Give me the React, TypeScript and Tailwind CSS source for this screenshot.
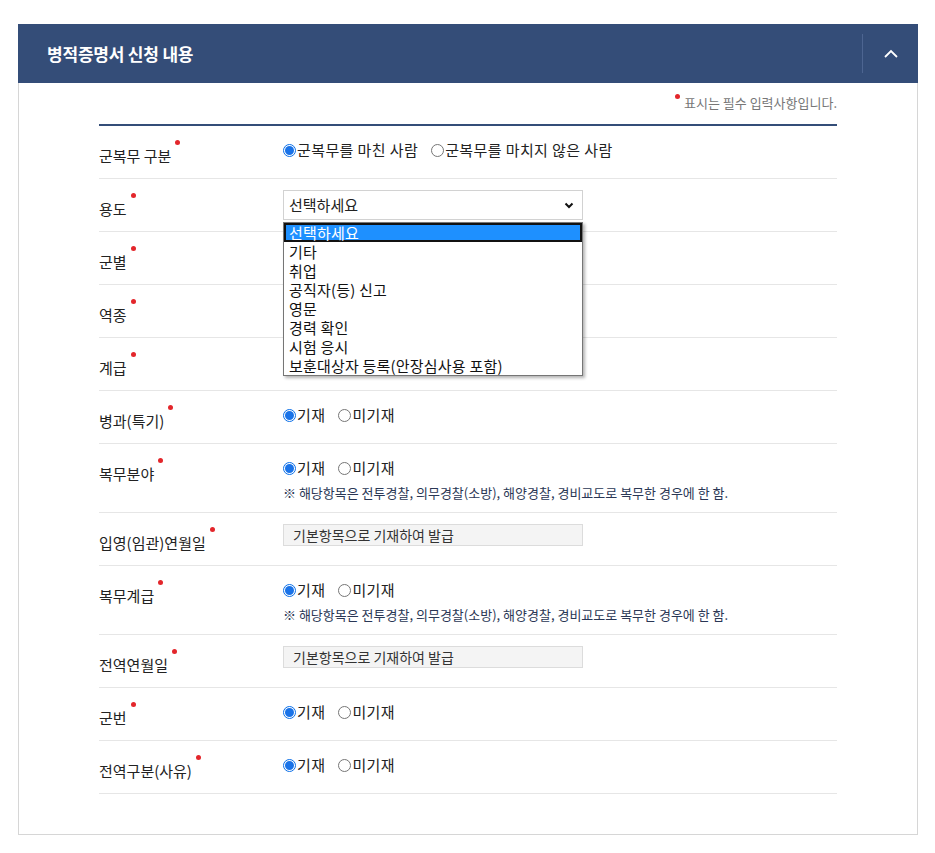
import type { ReactNode } from 'react'

const FONT = { fontFamily: '"Noto Sans CJK KR", "Noto Sans", sans-serif' }

const NOTE = '※ 해당항목은 전투경찰, 의무경찰(소방), 해양경찰, 경비교도로 복무한 경우에 한 함.'

const OPTIONS = [
  '선택하세요',
  '기타',
  '취업',
  '공직자(등) 신고',
  '영문',
  '경력 확인',
  '시험 응시',
  '보훈대상자 등록(안장심사용 포함)',
]

function Label({ children }: { children: ReactNode }) {
  return (
    <div className="pt-[17px]">
      <span className="relative inline-block text-[15px] leading-5 text-[#222]">
        {children}
        <span className="absolute right-[-9px] top-[-6px] h-[5px] w-[5px] rounded-full bg-[#e3262b]" />
      </span>
    </div>
  )
}

function Radio({ checked, label }: { checked?: boolean; label: string }) {
  return (
    <label className="flex items-center">
      <span
        className={
          checked
            ? 'flex h-[13px] w-[13px] items-center justify-center rounded-full border border-[#0b6fe8] bg-white'
            : 'h-[13px] w-[13px] rounded-full border border-[#767676] bg-white'
        }
      >
        {checked ? <span className="h-[9px] w-[9px] rounded-full bg-[#1a73e8]" /> : null}
      </span>
      <span className="ml-[1px] text-[15px] leading-5 tracking-[0.4px] text-[#222]">{label}</span>
    </label>
  )
}

function YesNo() {
  return (
    <div className="flex h-5 items-center gap-[13px]">
      <Radio checked label="기재" />
      <Radio label="미기재" />
    </div>
  )
}

function Row({ label, children, tall }: { label: string; children: ReactNode; tall?: boolean }) {
  return (
    <div
      className={
        'grid grid-cols-[184px_1fr] border-b border-[#e6e6e6] ' + (tall ? 'h-[69px]' : 'h-[53px]')
      }
    >
      <Label>{label}</Label>
      <div>{children}</div>
    </div>
  )
}

function RadioValue({ note }: { note?: boolean }) {
  return (
    <div className="pt-[14px]">
      <YesNo />
      {note ? (
        <p className="mt-[6px] text-[13px] leading-[18px] text-[#2a3755]">{NOTE}</p>
      ) : null}
    </div>
  )
}

function ReadOnly() {
  return (
    <div className="pt-[11px]">
      <div className="flex h-[22px] w-[300px] items-center border border-[#dcdcdc] bg-[#f4f4f4] pl-[9px] text-[14px] text-[#333]">
        기본항목으로 기재하여 발급
      </div>
    </div>
  )
}

export default function App() {
  return (
    <div className="min-h-[853px] bg-white pl-[18px] pt-[24px]" style={FONT}>
      <section className="w-[900px]">
        <header className="flex h-[59px] items-center justify-between bg-[#344d78]">
          <h2 className="pl-[29px] text-[17px] font-bold tracking-[-0.2px] text-white">병적증명서 신청 내용</h2>
          <div className="flex h-[39px] w-[56px] items-center justify-center border-l border-[#4d6591]">
            <svg width="16" height="10" viewBox="0 0 16 10" fill="none">
              <path d="M2 8 L8 2 L14 8" stroke="white" strokeWidth="1.8" />
            </svg>
          </div>
        </header>

        <div className="border border-t-0 border-[#d6d6d6] px-[80px] pb-[40px]">
          <p className="flex items-center justify-end pt-[11px] text-[13px] leading-[18px] text-[#777]">
            <span className="relative -top-[7px] mr-[4px] h-[5px] w-[5px] rounded-full bg-[#e3262b]" />
            표시는 필수 입력사항입니다.
          </p>

          <div className="mt-[12px] border-t-2 border-[#344d78]">
            <div className="grid h-[53px] grid-cols-[184px_1fr] border-b border-[#e6e6e6]">
              <Label>군복무 구분</Label>
              <div className="mt-[14px] flex h-5 items-center gap-[13px] self-start">
                <Radio checked label="군복무를 마친 사람" />
                <Radio label="군복무를 마치지 않은 사람" />
              </div>
            </div>

            <div className="relative z-10 grid h-[53px] grid-cols-[184px_1fr] border-b border-[#e6e6e6]">
              <Label>용도</Label>
              <div className="pt-[11px]">
                <div className="relative w-[300px]">
                  <div className="flex h-[30px] items-center justify-between border border-[#d2d2d2] bg-white pl-[5px] pr-[8px] text-[15px] text-[#222]">
                    선택하세요
                    <svg width="10" height="7" viewBox="0 0 10 7" fill="none">
                      <path d="M1.5 1.5 L5 5 L8.5 1.5" stroke="#111" strokeWidth="2" />
                    </svg>
                  </div>
                  <ul className="absolute left-0 top-[32px] w-[300px] border border-[#767676] bg-white shadow-[2px_2px_3px_rgba(0,0,0,0.3)]">
                    {OPTIONS.map((o, i) => (
                      <li
                        key={o}
                        className={
                          i === 0
                            ? 'h-[19px] border-2 border-[#111] bg-[#1e90ff] pl-[3px] text-[15px] leading-[15px] tracking-[0.2px] text-white'
                            : 'h-[19px] pl-[5px] text-[15px] leading-[19px] tracking-[0.2px] text-[#111]'
                        }
                      >
                        {o}
                      </li>
                    ))}
                  </ul>
                </div>
              </div>
            </div>

            <Row label="군별">
              <div />
            </Row>
            <Row label="역종">
              <div />
            </Row>
            <Row label="계급">
              <div />
            </Row>
            <Row label="병과(특기)">
              <RadioValue />
            </Row>
            <Row label="복무분야" tall>
              <RadioValue note />
            </Row>
            <Row label="입영(임관)연월일">
              <ReadOnly />
            </Row>
            <Row label="복무계급" tall>
              <RadioValue note />
            </Row>
            <Row label="전역연월일">
              <ReadOnly />
            </Row>
            <Row label="군번">
              <RadioValue />
            </Row>
            <Row label="전역구분(사유)">
              <RadioValue />
            </Row>
          </div>
        </div>
      </section>
    </div>
  )
}
